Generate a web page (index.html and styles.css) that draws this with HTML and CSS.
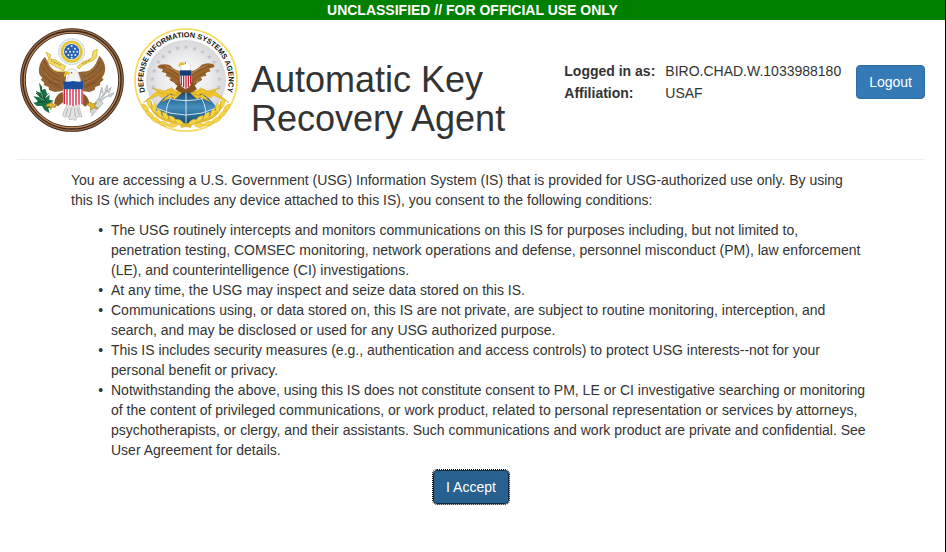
FILE: index.html
```html
<!DOCTYPE html>
<html lang="en">
<head>
<meta charset="utf-8">
<title>Automatic Key Recovery Agent</title>
<link rel="stylesheet" href="styles.css">
</head>
<body>
<div class="banner">UNCLASSIFIED // FOR OFFICIAL USE ONLY</div>
<header class="header">
  <div class="seals">
    <svg class="seal" viewBox="30 24 312 312" role="img" aria-label="Great Seal of the United States">
      <circle cx="186" cy="180" r="147" fill="#fff" stroke="#3a2618" stroke-width="17"/>
      <circle cx="186" cy="180" r="151" fill="none" stroke="#9a6a48" stroke-width="4"/>
      <circle cx="186" cy="180" r="143" fill="none" stroke="#b98359" stroke-width="4"/>
      <!-- glory and stars -->
      <circle cx="185" cy="95" r="39" fill="#e4edf6" stroke="#b9c6d4" stroke-width="3" stroke-dasharray="5 3"/>
      <circle cx="185" cy="95" r="29" fill="#fffbe0" stroke="#e5c62e" stroke-width="8"/>
      <circle cx="185" cy="95" r="23" fill="#2c63b0"/>
      <g fill="#dfeaf8"><circle cx="185" cy="78" r="3"/><circle cx="175" cy="86" r="3"/><circle cx="195" cy="86" r="3"/><circle cx="168" cy="95" r="3"/><circle cx="180" cy="95" r="3"/><circle cx="191" cy="95" r="3"/><circle cx="202" cy="95" r="3"/><circle cx="175" cy="105" r="3"/><circle cx="185" cy="105" r="3"/><circle cx="196" cy="105" r="3"/><circle cx="185" cy="113" r="3"/></g>
      <!-- ribbon -->
      <path d="M108 97l14 7-2 13q18 0 27 10l20 11-5 13-22-9q-17-12-31-16l8-10zM262 88l-2 22q-7 12-22 16l-20 10-11 11-6-7 18-15q20-5 27-12l3-19zM116 138q12 20 40 15l16 2v8q-30 6-49-9z" fill="#f2dd67" stroke="#c9a52c" stroke-width="2"/>
      <path d="M123 122l30 14M216 132l27-14" stroke="#907829" stroke-width="3" stroke-dasharray="3 2"/>
      <!-- wings -->
      <path d="M105 110c-16 15-22 39-16 54l8 10-5 5 11 9-2 7 15 6 1 9 17 6 24-3 9-34 2-22-25-1c-18-4-28-22-39-46z" fill="#946332"/>
      <path d="M268 107c17 17 21 38 15 54l-7 12 5 6-11 9 1 7-15 6-2 9-15 6-24-3-7-34-3-23 25-2c21-6 28-23 38-47z" fill="#946332"/>
      <path d="M104 123q5 29 43 47M98 139q10 30 51 45M97 164q21 25 54 31M112 184l39 19M269 123q-8 32-49 47M277 139q-12 31-56 46M276 166q-20 22-55 31M260 186l-38 17" fill="none" stroke="#75491d" stroke-width="2"/>
      <path d="M113 130q8 24 36 34M261 130q-9 24-37 34M106 158q14 22 42 32M268 157q-16 22-44 32" fill="none" stroke="#ae7b42" stroke-width="2"/>
      <!-- legs and tail -->
      <path d="M157 216q-22 9-25 34l11 9 27-20zM211 216q24 10 27 32l-12 12-27-20z" fill="#8b5828"/>
      <path d="M170 256l-13 30 8 6 8-4 6 12 9-3 8 4 8-12 12 2-10-35z" fill="#e3e3e3" stroke="#aaa" stroke-width="2"/>
      <path d="M174 265l-7 21M184 264l-5 27M193 264l3 27M201 264l8 21" stroke="#999" stroke-width="2"/>
      <!-- head -->
      <path d="M168 187l9-23-7-4 4-10q13-9 25 2 10 10 14 35z" fill="#f3f3f1" stroke="#c7c7c5" stroke-width="2"/>
      <path d="M180 157l-14-1-5 9 3 7 6-9 11-1z" fill="#e9bd25"/><circle cx="185" cy="158" r="2" fill="#444"/>
      <!-- shield -->
      <path d="M160 194h59v60q-16 2-30 7-14-5-29-7z" fill="#fff" stroke="#c8a7ab" stroke-width="1"/>
      <path d="M163 206v46M171 206v48M180 206v50M189 206v53M198 206v50M207 206v48M216 206v46" stroke="#cb2543" stroke-width="4"/>
      <path d="M160 183q12 4 29 0 17 4 30 0v25h-59z" fill="#1a4f9d"/>
      <!-- olive branch -->
      <path d="M87 188l10 13-4 10 13-5 5 14-5 14 13-10-1 15 13 3-12 9 9 11-13 2 4 16-15-9-8-13-15 0-11-10 15-3-15-16 19 3-12-19 15 5z" fill="#197245"/>
      <path d="M93 203q4 39 30 54M78 219q15 14 24 18M82 245l22 1M102 234l13-14" stroke="#0c4a28" stroke-width="3" fill="none"/>
      <path d="M94 216l5 18M84 229l18 12" stroke="#fff" stroke-width="1"/>
      <!-- arrows -->
      <path d="M292 196l-6 19-26 37M301 205l-17 17-27 33M311 221l-28 12-25 26M276 204l-14 46" fill="none" stroke="#b9c0c2" stroke-width="4"/>
      <path d="M292 196l-8 13 8 7zM304 202l-14 10 7 7zM311 218l-16 6 6 8zM276 202l-5 13 8 4zM262 238l-22 38 7 5-3 8 36-40z" fill="#d2d7d8" stroke="#a2a9ab" stroke-width="2"/>
      <path d="M111 252l16-4 5 8 8-3-5 10-8-3-6 9-1-10-12 1zM230 253l11-7 6 6 13-4-7 10 11 7-15-1-8 7v-11z" fill="#e7b72e" stroke="#9b7420" stroke-width="2"/>
    </svg>
    <svg class="seal" viewBox="18 24 312 312" role="img" aria-label="Defense Information Systems Agency seal">
      <defs>
        <radialGradient id="sky"><stop offset="0" stop-color="#fff"/><stop offset=".6" stop-color="#ececee"/><stop offset="1" stop-color="#d8d8dc"/></radialGradient>
        <linearGradient id="globe" x2="0" y2="1"><stop offset="0" stop-color="#16405f"/><stop offset=".5" stop-color="#4390bf"/><stop offset="1" stop-color="#16476b"/></linearGradient>
        <path id="motto" d="M60 238a128 128 0 1 1 228 0"/>
        <path id="star" d="M0-8l2 5h6l-5 4 2 6-5-4-5 4 2-6-5-4h6z"/>
        <path id="leaf" d="M-16 0q14-13 32 0-18 13-32 0z"/>
        <g id="branch">
          <path d="M66 244q6 42 50 56l74 20" fill="none" stroke="#e4b92c" stroke-width="9"/>
          <g fill="#f5d544" stroke="#c99a27" stroke-width="1">
            <use href="#leaf" transform="translate(64 250) rotate(78)"/>
            <use href="#leaf" transform="translate(52 264) rotate(52)"/>
            <use href="#leaf" transform="translate(79 264) rotate(90)"/>
            <use href="#leaf" transform="translate(65 283) rotate(38)"/>
            <use href="#leaf" transform="translate(94 280) rotate(70)"/>
            <use href="#leaf" transform="translate(83 300) rotate(25)"/>
            <use href="#leaf" transform="translate(113 288) rotate(50)"/>
            <use href="#leaf" transform="translate(107 311) rotate(12)"/>
            <use href="#leaf" transform="translate(134 297) rotate(38)"/>
            <use href="#leaf" transform="translate(133 316) rotate(2)"/>
            <use href="#leaf" transform="translate(154 306) rotate(25)"/>
          </g>
        </g>
      </defs>
      <circle cx="174" cy="180" r="153" fill="#fff" stroke="#f4da55" stroke-width="5"/>
      <circle cx="174" cy="180" r="120" fill="url(#sky)"/>
      <text class="motto" text-anchor="middle"><textPath href="#motto" startOffset="50%">DEFENSE INFORMATION SYSTEMS AGENCY</textPath></text>
      <g fill="#c3c3c8">
        <use href="#star" x="76" y="202"/><use href="#star" x="73" y="178"/><use href="#star" x="79" y="153"/><use href="#star" x="91" y="126"/><use href="#star" x="106" y="110"/><use href="#star" x="125" y="96"/><use href="#star" x="149" y="85"/><use href="#star" x="174" y="82"/><use href="#star" x="200" y="86"/><use href="#star" x="224" y="96"/><use href="#star" x="244" y="111"/><use href="#star" x="258" y="127"/><use href="#star" x="269" y="153"/><use href="#star" x="275" y="178"/><use href="#star" x="272" y="202"/>
      </g>
      <!-- globe -->
      <path d="M80 268q32-57 94-57t94 57q-34 38-94 44-60-6-94-44z" fill="url(#globe)"/>
      <path d="M174 211v98M143 216q-33 32-28 78M205 216q33 32 28 78M84 264q90 42 180 0M112 232q62 20 124 0" fill="none" stroke="#cfe2ee" stroke-width="3"/>
      <!-- lightning bolts -->
      <path id="bolts" d="M45 248l43-35 10 8 32-18 12 10 25 1-29 14-9-8-28 14-10-8zM72 204l39 9 9-5 34 10-6 8-29-7-10 6zM100 246l26-24 9 6 20-14 6 5-21 19-8-6z" fill="#f0c72d" stroke="#c48f22" stroke-width="1"/>
      <use href="#bolts" transform="translate(348 0) scale(-1 1)"/>
      <!-- wings -->
      <path d="M158 154q-19-3-32-18-15-6-30-2-10 4-5 10l14 4-4 8 15 4-3 8 15 5-2 8 15 5 2 9 17 5zM188 154q20-4 33-20 16-8 33-2 10 4 3 10l-14 4 5 8-16 5 3 8-16 4 2 8-15 6-2 9-18 5z" fill="#9b652e"/>
      <path d="M98 138q34 8 55 30M112 157q20 3 42 25M252 137q-35 6-61 31M235 157q-21 5-42 25M125 178l30 20M222 178l-30 20" fill="none" stroke="#80501f" stroke-width="3"/>
      <path d="M114 141q24 6 41 20M235 139q-23 4-43 21" fill="none" stroke="#bd8c50" stroke-width="3"/>
      <path d="M156 185l-14 23 15 9 17 3 18-3 15-9-14-23z" fill="#86501e"/>
      <path d="M157 155l3-13-3-7q3-12 15-11 14 1 15 17l2 14z" fill="#fff" stroke="#d5d5d5" stroke-width="2"/>
      <path d="M169 128l-13-1-5 9 3 5 6-6h10z" fill="#edbd29"/><circle cx="172" cy="129" r="2" fill="#444"/>
      <!-- shield -->
      <path d="M156 152h34v34q-1 14-17 22-16-8-17-22z" fill="#fff" stroke="#b19c9e" stroke-width="1"/>
      <path d="M160 166v29M167 166v36M174 166v40M181 166v35M188 166v26" stroke="#c72840" stroke-width="4"/>
      <path d="M156 151h34v16h-34z" fill="#183d75"/>
      <!-- laurel -->
      <use href="#branch"/>
      <use href="#branch" transform="translate(348 0) scale(-1 1)"/>
    </svg>
  </div>
  <h1 class="title">Automatic Key Recovery Agent</h1>
  <dl class="account">
    <dt>Logged in as:</dt><dd>BIRO.CHAD.W.1033988180</dd>
    <dt>Affiliation:</dt><dd>USAF</dd>
  </dl>
  <button class="button logout" type="button">Logout</button>
</header>
<main class="consent">
  <p>You are accessing a U.S. Government (USG) Information System (IS) that is provided for USG-authorized use only. By using this IS (which includes any device attached to this IS), you consent to the following conditions:</p>
  <ul>
    <li>The USG routinely intercepts and monitors communications on this IS for purposes including, but not limited to, penetration testing, COMSEC monitoring, network operations and defense, personnel misconduct (PM), law enforcement (LE), and counterintelligence (CI) investigations.</li>
    <li>At any time, the USG may inspect and seize data stored on this IS.</li>
    <li>Communications using, or data stored on, this IS are not private, are subject to routine monitoring, interception, and search, and may be disclosed or used for any USG authorized purpose.</li>
    <li>This IS includes security measures (e.g., authentication and access controls) to protect USG interests--not for your personal benefit or privacy.</li>
    <li>Notwithstanding the above, using this IS does not constitute consent to PM, LE or CI investigative searching or monitoring of the content of privileged communications, or work product, related to personal representation or services by attorneys, psychotherapists, or clergy, and their assistants. Such communications and work product are private and confidential. See User Agreement for details.</li>
  </ul>
  <button class="button accept" type="button">I Accept</button>
</main>
</body>
</html>
```
FILE: styles.css
```css
* { box-sizing: border-box; }

body {
  margin: 0;
  min-height: 100vh;
  border-right: 1px solid #000;
  background: #fff;
  color: #333;
  font: 14px/20px "Liberation Sans", Arial, sans-serif;
}

.banner {
  background: #008000;
  color: #fff;
  font-weight: bold;
  text-align: center;
}

.header {
  display: flex;
  align-items: flex-start;
  margin: 0 20px 0 17px;
  padding: 8px 0 21px 3px;
  border-bottom: 1px solid #eee;
}

.seals {
  display: flex;
  gap: 10px;
}

.seal {
  width: 104px;
  height: 104px;
}

.motto {
  font: bold 22px "Liberation Sans", Arial, sans-serif;
  fill: #111;
}

.title {
  flex: 1;
  max-width: 300px;
  margin: 32px 0 0 13px;
  font-size: 36px;
  font-weight: normal;
  line-height: 39px;
}

.account {
  display: grid;
  grid-template-columns: auto auto;
  column-gap: 10px;
  margin: 32px 15px 0 auto;
  line-height: 22px;
}

.account dt { font-weight: bold; }
.account dd { margin: 0; }

.button {
  height: 34px;
  padding: 6px 12px;
  border: 1px solid #2e6da4;
  border-radius: 4px;
  background: #337ab7;
  color: #fff;
  font: inherit;
}

.logout { margin-top: 37px; }

.consent {
  display: flex;
  flex-direction: column;
  align-items: center;
  padding: 10px 74px 0 71px;
}

.consent p {
  margin: 0 0 10px;
  padding-right: 10px;
}

.consent ul {
  margin: 0 0 10px;
  padding-left: 40px;
  list-style-type: "•\00a0\00a0";
}

.accept {
  background: #286090;
  border-color: #122b40;
  outline: 1px dotted #000;
}
```
